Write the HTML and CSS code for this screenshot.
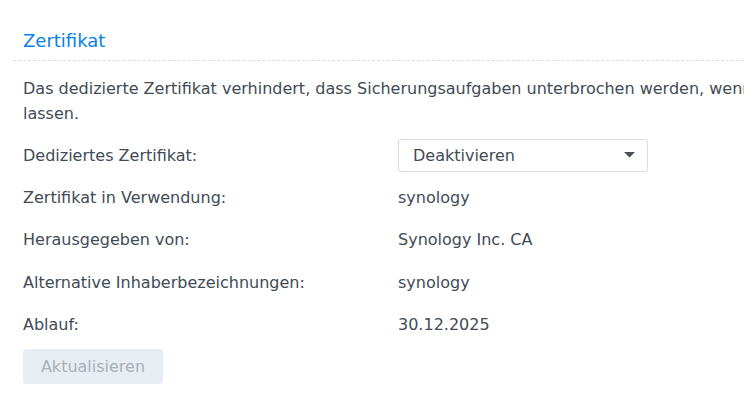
FILE: index.html
```html
<!DOCTYPE html>
<html lang="de">
<head>
<meta charset="utf-8">
<link rel="stylesheet" href="styles.css">
</head>
<body>
<div class="page">
  <h2 class="title">Zertifikat</h2>
  <div class="sep"></div>
  <p class="desc">Das dedizierte Zertifikat verhindert, dass Sicherungsaufgaben unterbrochen werden, wenn Sie das Standardzertifikat ändern<br>lassen.</p>
  <div class="form">
    <div class="row">
      <div class="label">Dediziertes Zertifikat:</div>
      <div class="value">
        <div class="select">
          <span>Deaktivieren</span>
          <svg class="caret" width="11" height="6" viewBox="0 0 11 6"><path d="M0 0h11L5.5 5.5z" fill="#4a5058"/></svg>
        </div>
      </div>
    </div>
    <div class="row">
      <div class="label">Zertifikat in Verwendung:</div>
      <div class="value">synology</div>
    </div>
    <div class="row">
      <div class="label">Herausgegeben von:</div>
      <div class="value">Synology Inc. CA</div>
    </div>
    <div class="row">
      <div class="label">Alternative Inhaberbezeichnungen:</div>
      <div class="value">synology</div>
    </div>
    <div class="row">
      <div class="label">Ablauf:</div>
      <div class="value">30.12.2025</div>
    </div>
  </div>
  <button class="btn" disabled>Aktualisieren</button>
</div>
</body>
</html>
```
FILE: styles.css
```css
html, body {
  margin: 0;
  padding: 0;
  background: #fff;
  overflow: hidden;
}
body {
  font-family: "DejaVu Sans", Verdana, sans-serif;
  font-size: 16px;
  color: #414b55;
}
.page {
  width: 744px;
  padding-top: 29px;
}
.title {
  margin: 0 0 0 23px;
  font-size: 18px;
  font-weight: normal;
  color: #057feb;
  line-height: 24px;
}
.sep {
  margin: 7px 0 0 13px;
  border-top: 1px dashed #d8dde2;
}
.desc {
  margin: 15px 0 0 23px;
  line-height: 25px;
  white-space: nowrap;
}
.form {
  margin: 8px 0 0 23px;
  display: flex;
  flex-direction: column;
}
.row {
  display: flex;
  align-items: center;
  height: 42.3px;
}
.label {
  width: 375px;
  flex: none;
}
.value {
  flex: 1;
}
.select {
  width: 250px;
  height: 33px;
  box-sizing: border-box;
  border: 1px solid #d6dce3;
  border-radius: 3px;
  display: flex;
  align-items: center;
  justify-content: space-between;
  padding: 0 12px 0 14px;
}
.caret {
  display: block;
}
.btn {
  display: block;
  margin: 4px 0 0 23px;
  width: 140px;
  height: 35px;
  border: none;
  border-radius: 3px;
  background: #e8edf3;
  color: #a8b0b8;
  font-family: inherit;
  font-size: 16px;
  padding: 0;
}
```
